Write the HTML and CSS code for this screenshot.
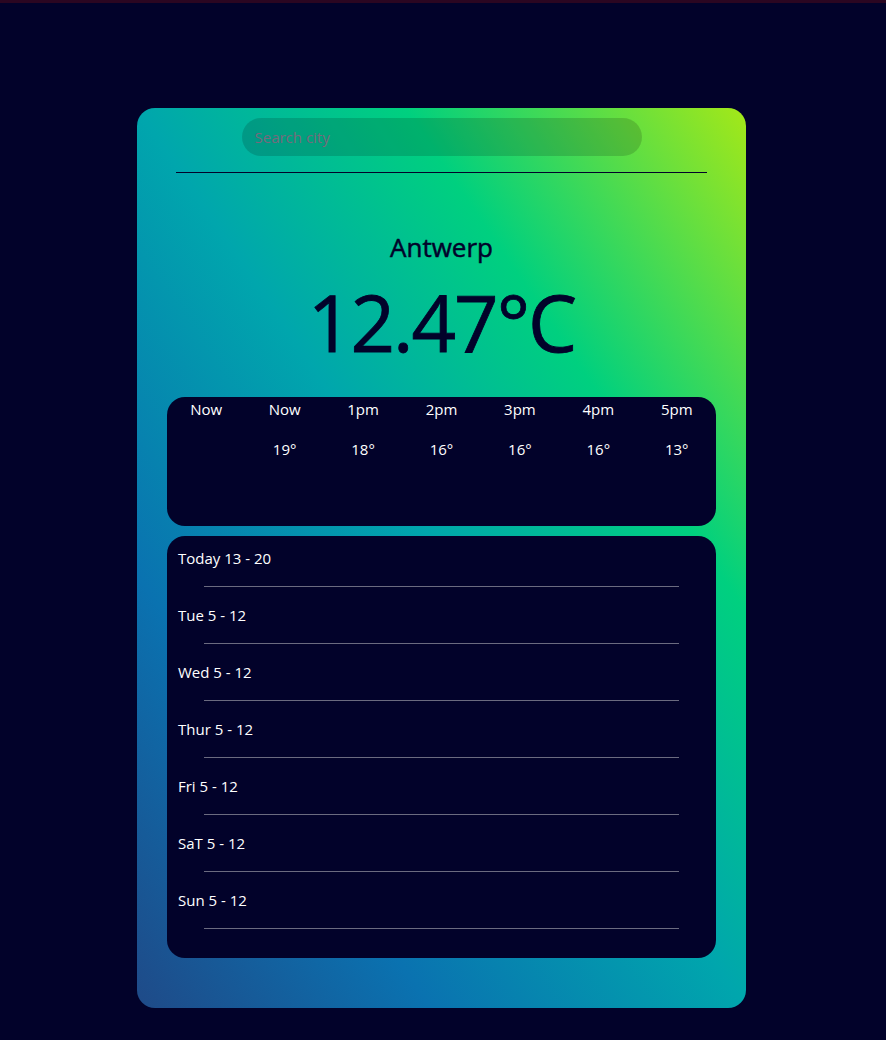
FILE: index.html
```html
<!DOCTYPE html>
<html lang="en">
<head>
    <meta charset="UTF-8">
    <meta name="viewport" content="width=device-width, initial-scale=1.0">
    <title>Weather</title>
    <link rel="stylesheet" href="styles.css">
</head>
<body>
    <div class="top-strip"></div>

    <div class="card">
        <div class="search">
            <input type="text" class="search-input" placeholder="Search city">
        </div>
        <hr class="divider">

        <div class="current">
            <h2 class="city">Antwerp</h2>
            <p class="temp">12.47°C</p>
        </div>

        <div class="hourly">
            <div class="hour"><span class="hour-label">Now</span><span class="hour-temp"></span></div>
            <div class="hour"><span class="hour-label">Now</span><span class="hour-temp">19°</span></div>
            <div class="hour"><span class="hour-label">1pm</span><span class="hour-temp">18°</span></div>
            <div class="hour"><span class="hour-label">2pm</span><span class="hour-temp">16°</span></div>
            <div class="hour"><span class="hour-label">3pm</span><span class="hour-temp">16°</span></div>
            <div class="hour"><span class="hour-label">4pm</span><span class="hour-temp">16°</span></div>
            <div class="hour"><span class="hour-label">5pm</span><span class="hour-temp">13°</span></div>
        </div>

        <div class="daily">
            <div class="day"><p class="day-text">Today 13 - 20</p><hr class="day-line"></div>
            <div class="day"><p class="day-text">Tue 5 - 12</p><hr class="day-line"></div>
            <div class="day"><p class="day-text">Wed 5 - 12</p><hr class="day-line"></div>
            <div class="day"><p class="day-text">Thur 5 - 12</p><hr class="day-line"></div>
            <div class="day"><p class="day-text">Fri 5 - 12</p><hr class="day-line"></div>
            <div class="day"><p class="day-text">SaT 5 - 12</p><hr class="day-line"></div>
            <div class="day"><p class="day-text">Sun 5 - 12</p><hr class="day-line"></div>
        </div>
    </div>
</body>
</html>
```

FILE: styles.css
```css
* {
    margin: 0;
    padding: 0;
    box-sizing: border-box;
}

body {
    font-family: 'Segoe UI', 'Open Sans', 'Noto Sans', sans-serif;
    background: #02022a;
    color: #02022a;
    min-height: 100vh;
}

.top-strip {
    height: 3px;
    background: #2b0621;
}

.card {
    width: 609px;
    height: 900px;
    margin: 105px 0 0 137px;
    padding: 10px 30px 0;
    border-radius: 18px;
    background: linear-gradient(to top right, #1f4a88 0%, #0a72b0 24%, #00a6ad 50%, #00d07f 72%, #a4e818 100%);
}

.search {
    display: flex;
    justify-content: center;
}

.search-input {
    width: 400px;
    height: 38px;
    border: none;
    outline: none;
    border-radius: 19px;
    padding: 0 13px;
    background: rgba(0, 0, 0, 0.15);
    font-family: inherit;
    font-size: 15px;
    color: #02022a;
}

.search-input::placeholder {
    color: #756a7c;
}

.divider {
    border: none;
    border-top: 1px solid #02022a;
    margin: 16px 9px 0;
}

.current {
    text-align: center;
    padding-top: 56px;
    height: 224px;
}

.city {
    font-size: 26px;
    font-weight: 400;
    line-height: 36px;
    -webkit-text-stroke: 0.5px #02022a;
}

.temp {
    font-size: 78px;
    line-height: 80px;
    letter-spacing: -2px;
    margin-top: 17px;
    -webkit-text-stroke: 0.8px #02022a;
}

.hourly {
    display: flex;
    height: 129px;
    padding-top: 2px;
    border-radius: 18px;
    background: #02022a;
    color: #fff;
}

.hour {
    flex: 1;
    display: flex;
    flex-direction: column;
    align-items: center;
    gap: 20px;
    font-size: 15px;
    line-height: 20px;
}

.hour-temp {
    height: 20px;
}

.daily {
    margin-top: 10px;
    padding: 12px 0 11px;
    border-radius: 18px;
    background: #02022a;
    color: #fff;
}

.day-text {
    padding-left: 11px;
    font-size: 15px;
    line-height: 20px;
}

.day-line {
    border: none;
    border-top: 1px solid #6b6b80;
    margin: 18px 37px;
}
```
